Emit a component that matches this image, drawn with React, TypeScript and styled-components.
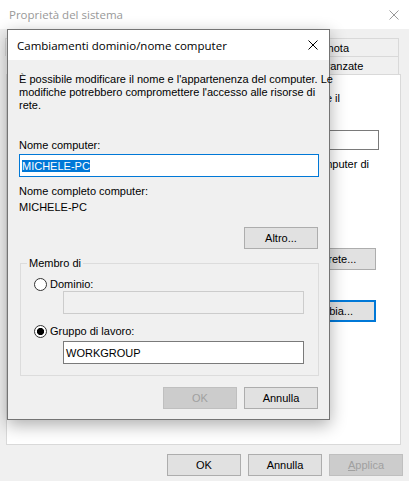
import React from 'react';
import styled, { createGlobalStyle } from 'styled-components';

const GlobalStyle = createGlobalStyle`
  html, body {
    margin: 0;
    padding: 0;
  }
  body {
    background: #f0f0f0;
    font-family: "Liberation Sans", Arial, sans-serif;
    font-size: 11px;
    color: #000;
  }
`;

const Screen = styled.div`
  position: relative;
  width: 409px;
  height: 481px;
  overflow: hidden;
  background: #f0f0f0;
`;

/* ---------- background window: Proprietà del sistema ---------- */

const BackWindow = styled.div`
  display: flex;
  flex-direction: column;
  height: 100%;
`;

const TitleBar = styled.div<{ $inactive?: boolean }>`
  display: flex;
  align-items: center;
  justify-content: space-between;
  flex: none;
  height: ${(p) => (p.$inactive ? 29 : 30)}px;
  padding: ${(p) => (p.$inactive ? '0 10px 0 9px' : '0 11px 0 9px')};
  background: #fff;
  color: ${(p) => (p.$inactive ? '#999' : '#000')};
  font-family: "Open Sans", "Noto Sans", sans-serif;
  font-size: 11.5px;
`;

const CloseGlyph = ({ color }: { color: string }) => (
  <svg width="10" height="10" viewBox="0 0 10 10">
    <path d="M0.5 0.5 L9.5 9.5 M9.5 0.5 L0.5 9.5" stroke={color} strokeWidth="1" fill="none" />
  </svg>
);

const BackBody = styled.div`
  flex: 1;
  display: flex;
  flex-direction: column;
  padding: 9px 8px 0 6px;
  min-height: 0;
`;

const TabRow = styled.div<{ $indent?: number }>`
  display: flex;
  height: 18px;
  margin-right: 2px;
  margin-left: ${(p) => p.$indent ?? 0}px;
`;

const Tab = styled.div<{ $active?: boolean }>`
  flex: 1 1 auto;
  display: flex;
  align-items: center;
  justify-content: center;
  white-space: nowrap;
  box-sizing: border-box;
  border: 1px solid #d9d9d9;
  border-bottom: none;
  margin-left: -1px;
  background: ${(p) => (p.$active ? '#fff' : '#f0f0f0')};
`;

const Panel = styled.div`
  flex: 1;
  display: flex;
  flex-direction: column;
  align-items: flex-end;
  padding-top: 17px;
  background: #fff;
  border: 1px solid #d9d9d9;
  overflow: hidden;
`;

const PanelLine = styled.div<{ $right: number; $top?: number }>`
  white-space: nowrap;
  line-height: 13px;
  margin-right: ${(p) => p.$right}px;
  margin-top: ${(p) => p.$top ?? 0}px;
`;

const PanelField = styled.div<{ $right: number; $top: number }>`
  width: 250px;
  height: 20px;
  box-sizing: border-box;
  border: 1px solid #7a7a7a;
  margin-right: ${(p) => p.$right}px;
  margin-top: ${(p) => p.$top}px;
`;

const Footer = styled.div`
  display: flex;
  justify-content: flex-end;
  gap: 7px;
  padding: 9px 0 5px 0;
  margin-right: -2px;
`;

const Button = styled.div<{
  $disabled?: boolean;
  $default?: boolean;
  $right?: number;
  $top?: number;
  $width?: number;
}>`
  display: flex;
  align-items: center;
  justify-content: center;
  width: ${(p) => p.$width ?? 74}px;
  height: 22px;
  box-sizing: border-box;
  white-space: nowrap;
  background: ${(p) => (p.$disabled ? '#cccccc' : '#e1e1e1')};
  border: ${(p) =>
    p.$default ? '2px solid #0078d7' : p.$disabled ? '1px solid #bfbfbf' : '1px solid #adadad'};
  color: ${(p) => (p.$disabled ? '#a0a0a0' : '#000')};
  margin-right: ${(p) => p.$right ?? 0}px;
  margin-top: ${(p) => p.$top ?? 0}px;
`;

const Accel = styled.span`
  text-decoration: underline;
`;

/* ---------- foreground dialog: Cambiamenti dominio/nome computer ---------- */

const Dialog = styled.div`
  position: absolute;
  left: 7px;
  top: 29px;
  width: 323px;
  height: 391px;
  box-sizing: border-box;
  display: flex;
  flex-direction: column;
  border: 1px solid #747474;
  background: #f0f0f0;
  box-shadow: 0 5px 16px rgba(0, 0, 0, 0.32);
`;

const DialogBody = styled.div`
  flex: 1;
  display: flex;
  flex-direction: column;
  padding: 13px 10px 0 11px;
`;

const Text = styled.div<{ $top?: number }>`
  line-height: 13px;
  margin-top: ${(p) => p.$top ?? 0}px;
  white-space: nowrap;
`;

const TextBox = styled.div<{ $focused?: boolean; $disabled?: boolean; $top?: number; $indent?: number }>`
  display: flex;
  align-items: center;
  height: 23px;
  box-sizing: border-box;
  padding-left: 2px;
  margin-top: ${(p) => p.$top ?? 0}px;
  margin-left: ${(p) => p.$indent ?? 0}px;
  background: ${(p) => (p.$disabled ? '#f0f0f0' : '#fff')};
  border: 1px solid ${(p) => (p.$focused ? '#0078d7' : p.$disabled ? '#cccccc' : '#7a7a7a')};
`;

const Selection = styled.span`
  display: inline-block;
  line-height: 12px;
  background: #0078d7;
  color: #fff;
`;

const RightRow = styled.div<{ $top: number }>`
  display: flex;
  justify-content: flex-end;
  gap: 7px;
  margin-top: ${(p) => p.$top}px;
  margin-right: 1px;
`;

const Group = styled.fieldset`
  margin: 8px 0 0 1px;
  padding: 0;
  border: 1px solid #dcdcdc;
  min-width: 0;
`;

const Legend = styled.legend`
  margin-left: 6px;
  padding: 0 2px;
  line-height: 13px;
`;

const GroupInner = styled.div`
  display: flex;
  flex-direction: column;
  padding: 7px 14px 11px 13px;
`;

const RadioRow = styled.div<{ $top?: number }>`
  display: flex;
  align-items: center;
  gap: 3px;
  height: 14px;
  margin-top: ${(p) => p.$top ?? 0}px;
`;

const Radio = styled.span<{ $checked?: boolean }>`
  width: 13px;
  height: 13px;
  box-sizing: border-box;
  border-radius: 50%;
  border: 1px solid #333;
  background: ${(p) =>
    p.$checked ? 'radial-gradient(circle, #000 0 3.3px, #fff 3.9px)' : '#fff'};
`;

export default function App() {
  return (
    <Screen>
      <GlobalStyle />
      <BackWindow>
        <TitleBar $inactive>
          <span>Proprietà del sistema</span>
          <CloseGlyph color="#999" />
        </TitleBar>
        <BackBody>
          <TabRow>
            <Tab>Protezione sistema</Tab>
            <Tab>Connessione remota</Tab>
          </TabRow>
          <TabRow $indent={10}>
            <Tab $active>Nome computer</Tab>
            <Tab>Hardware</Tab>
            <Tab>Avanzate</Tab>
          </TabRow>
          <Panel>
            <PanelLine $right={60}>Le informazioni seguenti verranno utilizzate per identificare il</PanelLine>
            <PanelField $right={21} $top={25} />
            <PanelLine $right={31} $top={8}>Ad esempio: "Computer di</PanelLine>
            <Button $right={24} $top={77} $width={93}>ID di rete...</Button>
            <Button $right={24} $top={30} $width={93} $default>Cambia...</Button>
          </Panel>
          <Footer>
            <Button>OK</Button>
            <Button>Annulla</Button>
            <Button $disabled>
              <span>
                <Accel>A</Accel>pplica
              </span>
            </Button>
          </Footer>
        </BackBody>
      </BackWindow>

      <Dialog>
        <TitleBar>
          <span>Cambiamenti dominio/nome computer</span>
          <CloseGlyph color="#000" />
        </TitleBar>
        <DialogBody>
          <Text>
            È possibile modificare il nome e l'appartenenza del computer. Le
            <br />
            modifiche potrebbero compromettere l'accesso alle risorse di
            <br />
            rete.
          </Text>
          <Text $top={27}>Nome computer:</Text>
          <TextBox $focused $top={2}>
            <Selection>MICHELE-PC</Selection>
          </TextBox>
          <Text $top={8}>Nome completo computer:</Text>
          <Text $top={3}>MICHELE-PC</Text>
          <RightRow $top={13}>
            <Button>Altro...</Button>
          </RightRow>
          <Group>
            <Legend>Membro di</Legend>
            <GroupInner>
              <RadioRow>
                <Radio />
                <span>Dominio:</span>
              </RadioRow>
              <TextBox $disabled $indent={29} />
              <RadioRow $top={10}>
                <Radio $checked />
                <span>Gruppo di lavoro:</span>
              </RadioRow>
              <TextBox $indent={29} $top={3}>
                <span>WORKGROUP</span>
              </TextBox>
            </GroupInner>
          </Group>
          <RightRow $top={11}>
            <Button $disabled>OK</Button>
            <Button>Annulla</Button>
          </RightRow>
        </DialogBody>
      </Dialog>
    </Screen>
  );
}
